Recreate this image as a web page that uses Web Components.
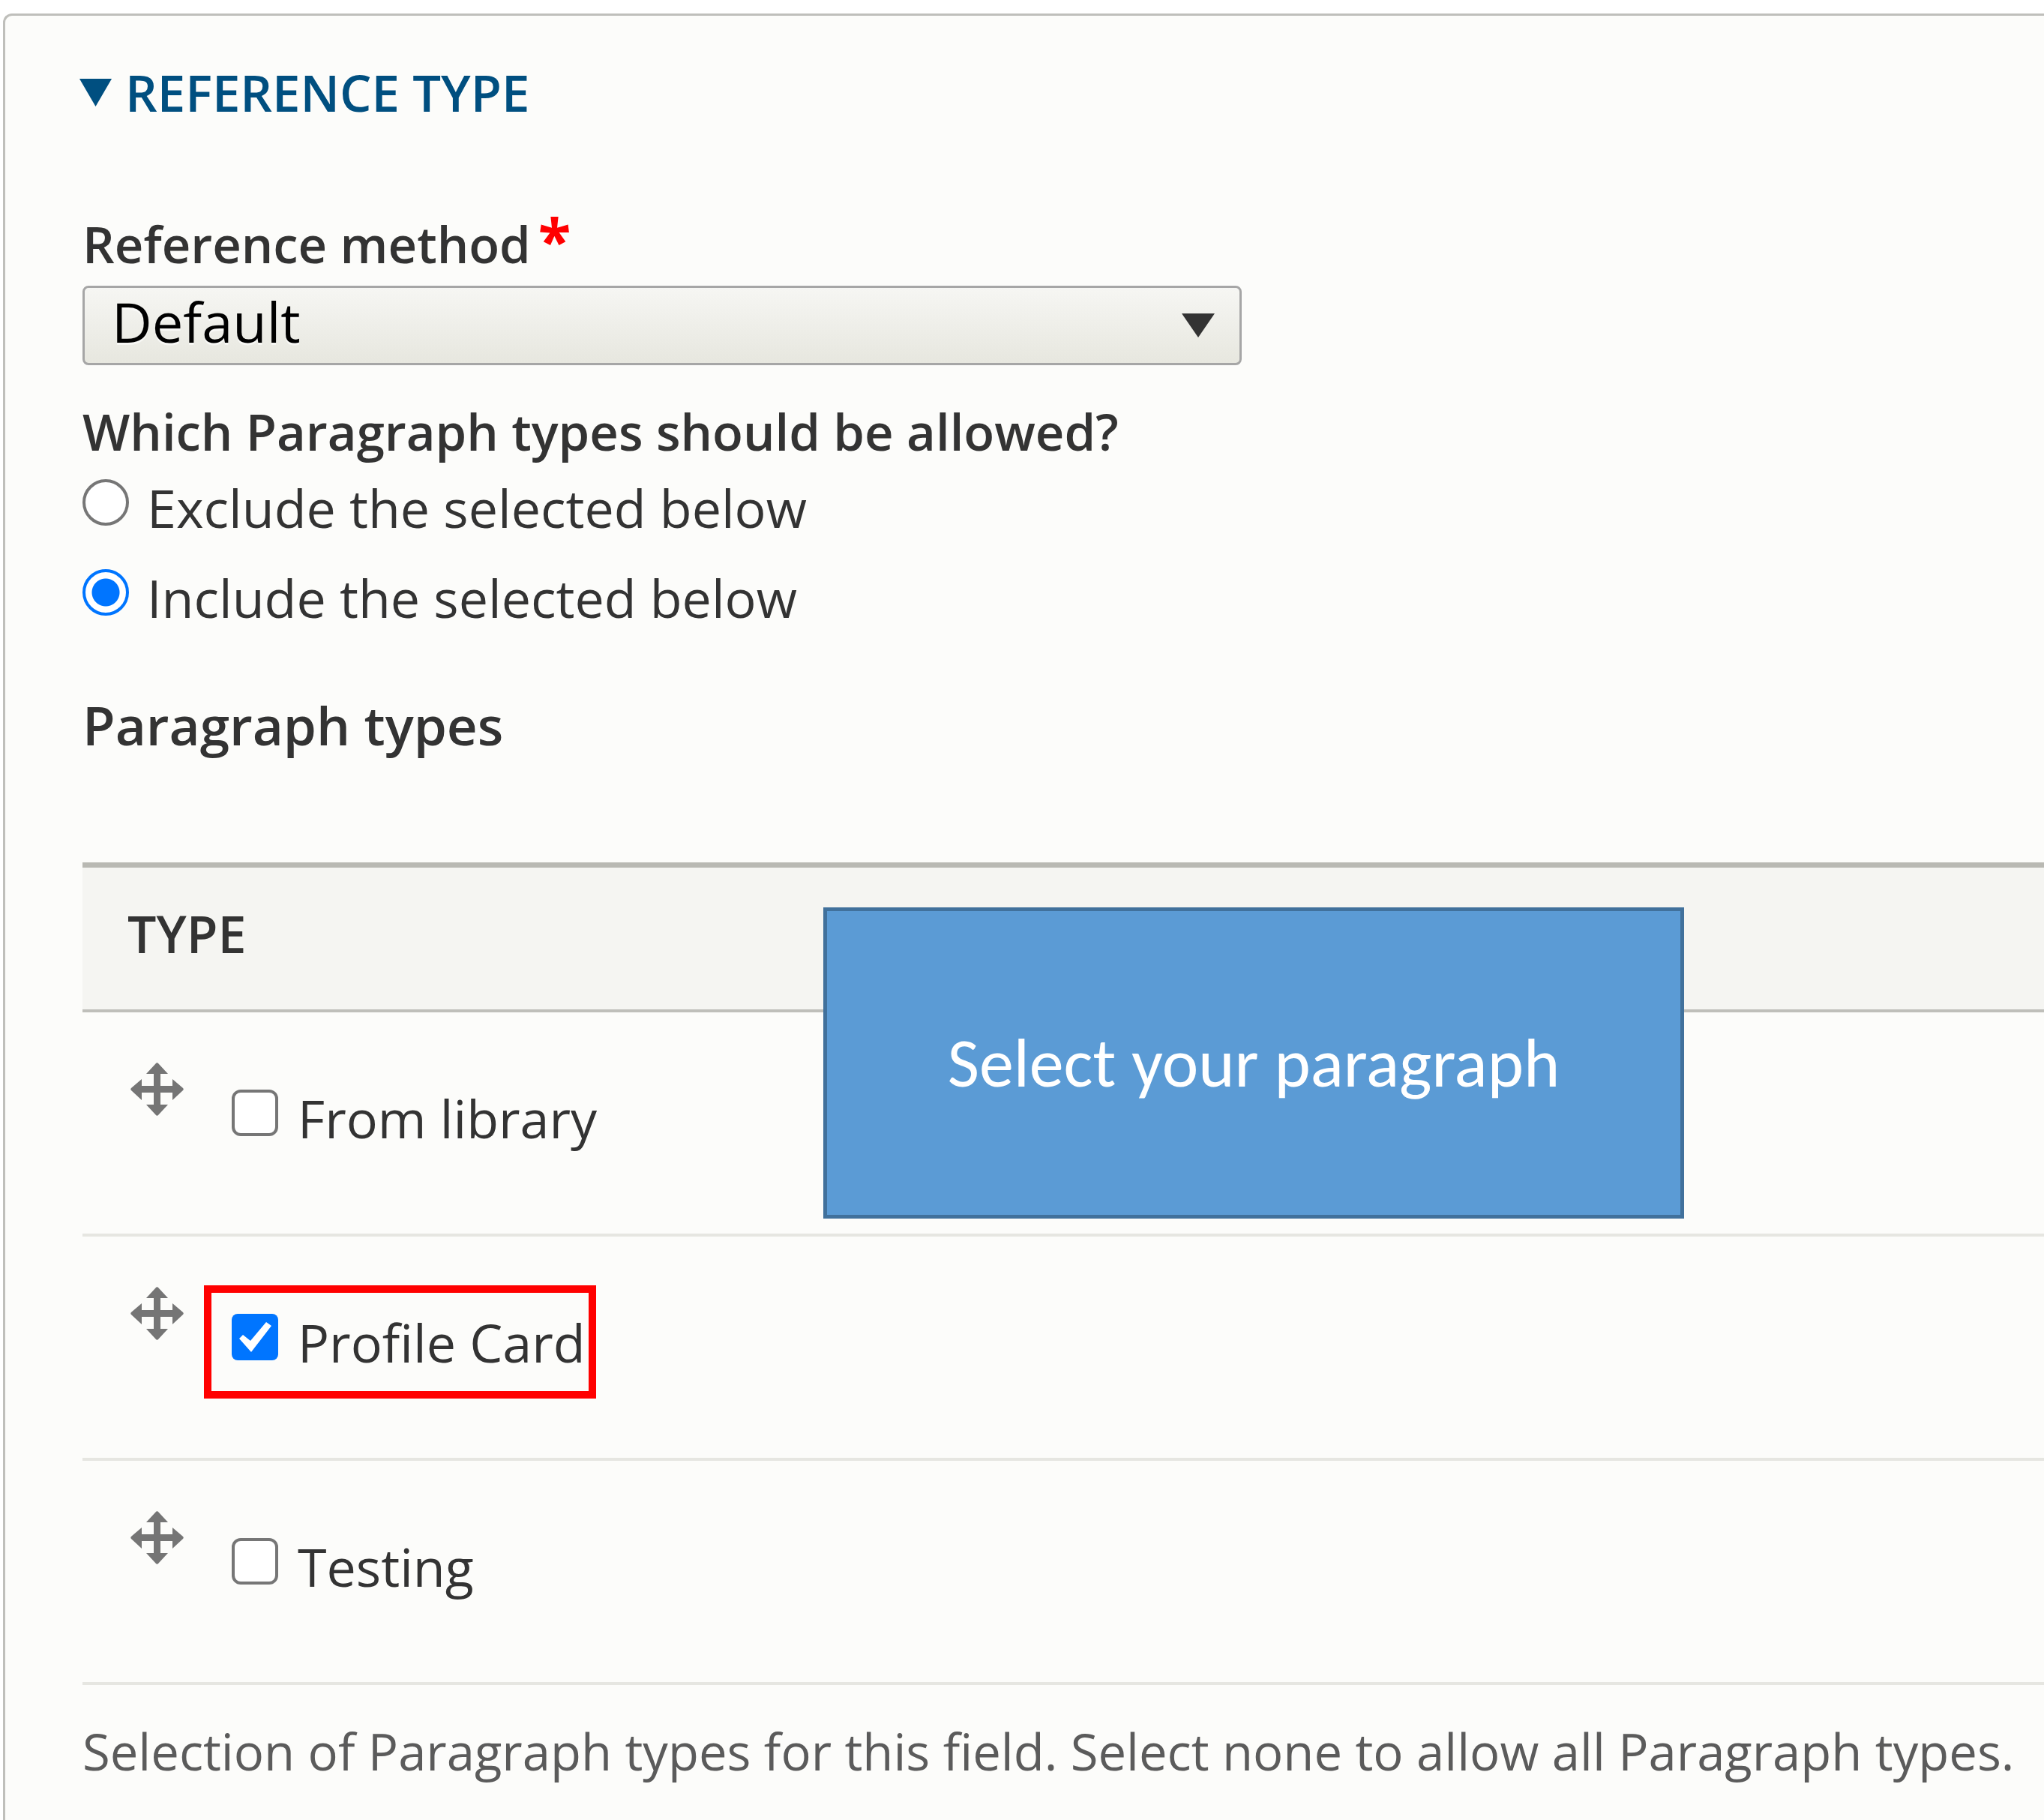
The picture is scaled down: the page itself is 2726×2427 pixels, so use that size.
<!DOCTYPE html>
<html lang="en">
<head>
<meta charset="utf-8">
<title>Reference type</title>
<style>
  body {
    margin: 0;
    background: #fff;
    color: #333;
    font: 70px/88px "Open Sans", "Noto Sans", sans-serif;
    --strong: 600;
  }
</style>
</head>
<body>
<settings-panel heading="Reference type">
  <select-field label="Reference method" value="Default"></select-field>
  <radio-group label="Which Paragraph types should be allowed?" options="Exclude the selected below|Include the selected below" selected="1"></radio-group>
  <type-table caption="Paragraph types" heading="Type" rows="From library|Profile Card|Testing" selected="1">
    <call-out>Select your paragraph</call-out>
  </type-table>
  <help-text>Selection of Paragraph types for this field. Select none to allow all Paragraph types.</help-text>
</settings-panel>

<script>
class Base extends HTMLElement {
  connectedCallback() {
    if (!this.shadowRoot) this.attachShadow({ mode: 'open' }).innerHTML = this.render();
  }
  get list() { return this.getAttribute('rows').split('|'); }
}

customElements.define('settings-panel', class extends Base {
  render() {
    return `<style>
      :host { display: block; padding: 18px 0 0 4px; }
      details {
        box-sizing: border-box; min-height: calc(100vh - 18px);
        padding: 58px 0 20px 99px;
        background: #fcfcfa; border: solid #bfbfbb; border-width: 3px 0 0 3px;
        border-top-left-radius: 12px;
      }
      summary {
        display: flex; align-items: center; gap: 18px; margin-bottom: 114px;
        list-style: none; color: #004f80; font-size: 67px; font-weight: var(--strong); text-transform: uppercase;
      }
      summary svg { width: 43px; height: 37px; fill: currentColor; }
      .body { padding-left: 4px; }
    </style>
    <details open>
      <summary><svg viewBox="0 0 43 37" aria-hidden="true"><path d="M0 0H43L21.500 37Z"/></svg>${this.getAttribute('heading')}</summary>
      <div class="body"><slot></slot></div>
    </details>`;
  }
});

customElements.define('select-field', class extends Base {
  render() {
    return `<style>
      :host { display: block; margin-bottom: 44px; }
      label { display: flex; gap: 10px; margin-bottom: 12px; font-size: 67px; font-weight: var(--strong); }
      .required { color: #f00; font-size: 80px; line-height: 76px; font-weight: 700; }
      .box { display: grid; align-items: center; width: 1546px; max-width: 100%; }
      .box > * { grid-area: 1 / 1; }
      select {
        appearance: none; box-sizing: border-box; width: 100%; height: 106px;
        padding: 0 90px 10px 36px; border: 3px solid #a6a6a6; border-radius: 8px;
        background: linear-gradient(#f6f6f3, #e7e7df);
        color: #000; font: 74px/88px "Open Sans", "Noto Sans", sans-serif;
        text-shadow: 0 3px rgba(255, 255, 255, .6);
      }
      svg { justify-self: end; width: 44px; height: 32px; margin-right: 36px; fill: #333; pointer-events: none; }
    </style>
    <label for="s">${this.getAttribute('label')}<span class="required">*</span></label>
    <div class="box">
      <select id="s"><option>${this.getAttribute('value')}</option></select>
      <svg viewBox="0 0 44 32" aria-hidden="true"><path d="M0 0H44L22 32Z"/></svg>
    </div>`;
  }
});

customElements.define('radio-group', class extends Base {
  render() {
    const on = +this.getAttribute('selected');
    return `<style>
      :host { display: block; margin-bottom: 82px; }
      fieldset { display: flex; flex-direction: column; gap: 32px; margin: 0; padding: 0; border: 0; }
      legend { padding: 0; margin-bottom: 14px; font-size: 67px; font-weight: var(--strong); }
      .row { display: flex; gap: 24px; }
      input {
        appearance: none; box-sizing: border-box; flex: none; width: 62px; height: 62px; margin: 6px 0 0;
        border: 4px solid #767676; border-radius: 50%; background: #fff;
      }
      input:checked { border-color: #0075ff; background: radial-gradient(circle, #0075ff 18px, #fff 19px); }
    </style>
    <fieldset><legend>${this.getAttribute('label')}</legend>
      ${this.getAttribute('options').split('|').map((t, i) => `<div class="row">
        <input type="radio" name="mode" id="r${i}"${i === on ? ' checked' : ''}><label for="r${i}">${t}</label>
      </div>`).join('')}
    </fieldset>`;
  }
});

customElements.define('drag-handle', class extends Base {
  render() {
    return `<style>
      :host { display: block; }
      a, svg { display: block; width: 71px; height: 71px; }
      svg { fill: #757575; }
    </style>
    <a href="#" aria-label="Drag to re-order"><svg viewBox="0 0 71 71" aria-hidden="true">
      <path d="M33.500 1.500Q35.500-1 37.500 1.500L50 15H40V31H56V22L69.500 33.500Q72 35.500 69.500 37.500L56 50V40H40V56H50L37.500 69.500Q35.500 72 33.500 69.500L21 56H31V40H15V50L1.500 37.500Q-1 35.500 1.500 33.500L15 22V31H31V15H21Z"/>
    </svg></a>`;
  }
});

customElements.define('check-item', class extends Base {
  render() {
    return `<style>
      :host { display: inline-flex; position: relative; gap: 26px; }
      :host([highlight])::after {
        content: ""; position: absolute; inset: -32px -14px -31px -37px;
        border: 10px solid #f00; pointer-events: none;
      }
      input {
        appearance: none; box-sizing: border-box; flex: none; width: 62px; height: 62px; margin: 6px 0 0;
        border: 4px solid #767676; border-radius: 12px; background: #fff;
      }
      input:checked { border: 0; border-radius: 8px; background: #0075ff; }
      input:checked::before {
        content: ""; display: block; width: 62px; height: 62px; background: #fff;
        clip-path: polygon(10px 33px, 15px 28px, 25px 36px, 46px 11px, 53px 16px, 26px 51px);
      }
    </style>
    <input type="checkbox" id="c"${this.hasAttribute('checked') ? ' checked' : ''}><label for="c"><slot></slot></label>`;
  }
});

customElements.define('type-table', class extends Base {
  render() {
    const on = +this.getAttribute('selected');
    return `<style>
      :host { display: block; position: relative; margin-bottom: 44px; }
      table { width: 100%; border-collapse: separate; border-spacing: 0; }
      caption { padding-bottom: 139px; text-align: left; font-size: 71px; font-weight: var(--strong); }
      th {
        padding: 44px 60px 57px; background: #f5f5f2; text-align: left; text-transform: uppercase;
        font-size: 68px; font-weight: var(--strong);
        border-top: 7px solid #b9b9b3; border-bottom: 4px solid #bfbfba;
      }
      td { padding: 0; border-bottom: 4px solid #e6e6e1; }
      .cell { display: flex; align-items: flex-start; gap: 64px; padding: 67px 64px 110px; }
      check-item { margin-top: 30px; }
    </style>
    <table>
      <caption>${this.getAttribute('caption')}</caption>
      <thead><tr><th scope="col">${this.getAttribute('heading')}</th></tr></thead>
      <tbody>${this.list.map((t, i) => `<tr><td><div class="cell">
        <drag-handle></drag-handle>
        <check-item${i === on ? ' checked highlight' : ''}>${t}</check-item>
      </div></td></tr>`).join('')}</tbody>
    </table>
    <slot></slot>`;
  }
});

customElements.define('call-out', class extends Base {
  render() {
    return `<style>
      :host {
        position: absolute; top: 287px; left: 988px; box-sizing: border-box;
        display: flex; align-items: center; justify-content: center;
        width: 1148px; height: 415px;
        background: #5b9bd5; border: 5px solid #41719c; color: #fff;
        font: 92px/100px Carlito, Lato, sans-serif;
      }
    </style><slot></slot>`;
  }
});

customElements.define('help-text', class extends Base {
  render() {
    return `<style>:host { display: block; color: #5b5b5b; font-size: 67px; white-space: nowrap; }</style><slot></slot>`;
  }
});
</script>
</body>
</html>
